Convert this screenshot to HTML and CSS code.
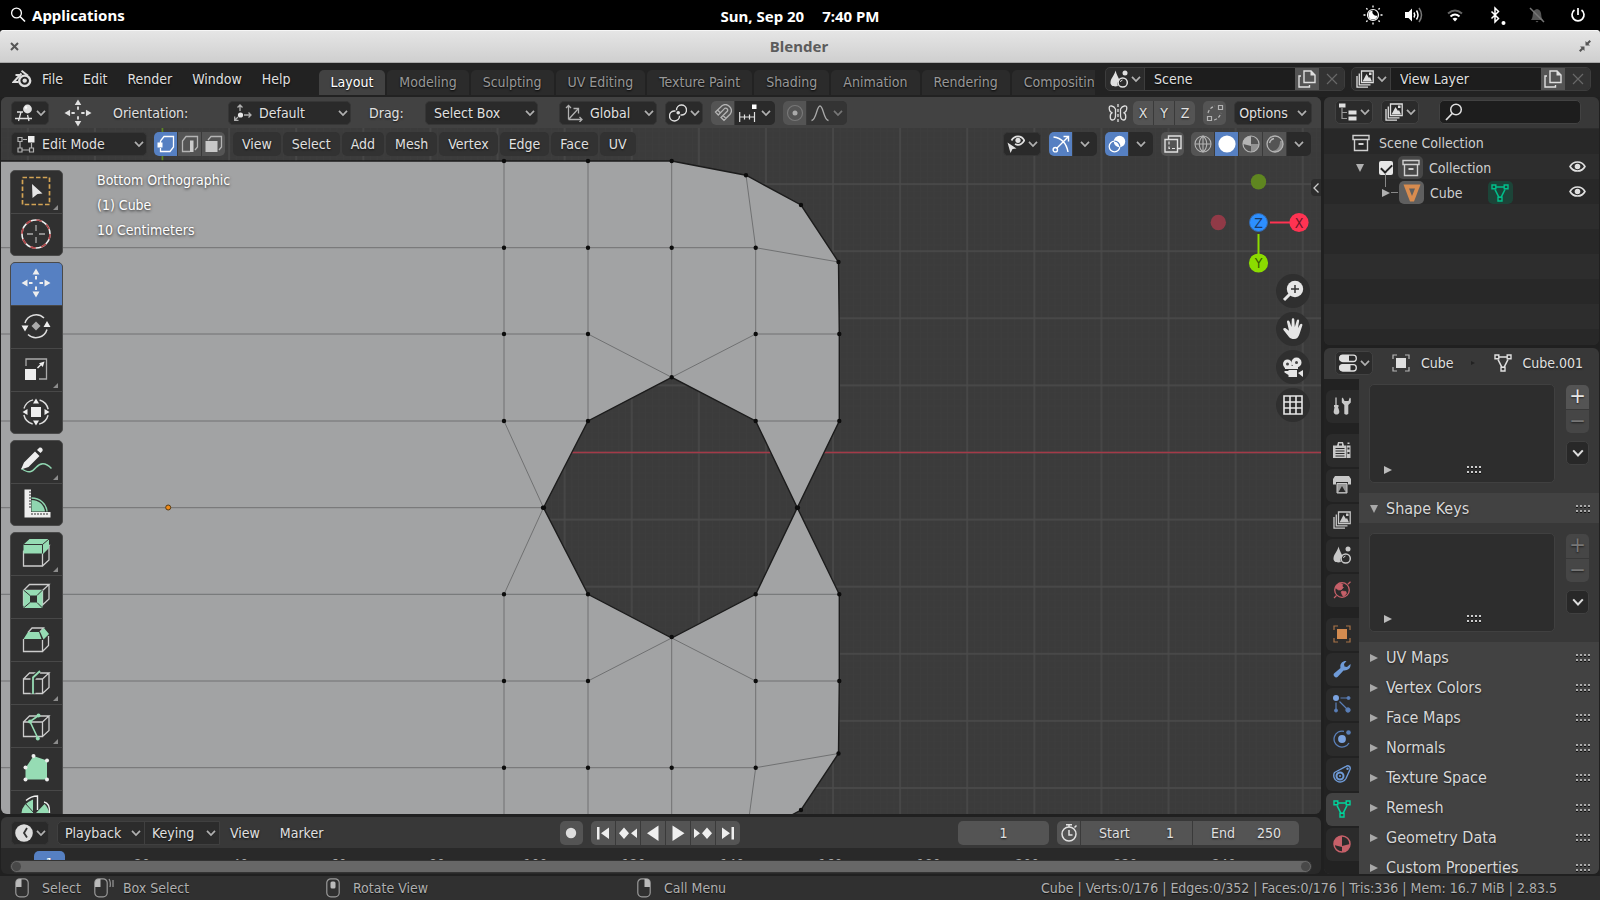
FILE: index.html
```html
<!DOCTYPE html>
<html lang="en">
<head>
<meta charset="utf-8">
<title>Blender</title>
<link rel="stylesheet" href="styles.css">
</head>
<body>
<svg class="sprite" aria-hidden="true">
  <symbol id="chev" viewBox="0 0 10 8"><path d="M1 1.800 5 6 9 1.800" fill="none" stroke="currentColor" stroke-width="1.700"/></symbol>
  <symbol id="view3d" viewBox="0 0 18 18"><path d="M2 8h6M0 14.500h17M6 8 3.500 17M12.500 11 14 17" fill="none" stroke="currentColor" stroke-width="1.300"/><circle cx="12.500" cy="5" r="4.400" fill="currentColor"/><circle cx="11" cy="3.500" r="1.200" fill="#fff"/></symbol>
  <symbol id="move" viewBox="0 0 30 30"><g fill="currentColor"><path d="M15 0.500 18.500 6.500h-7zM15 29.500l3.500-6h-7zM.5 15l6-3.500v7zM29.500 15l-6-3.500v7z"/><path d="M14 8h2v3.500h-2zM14 18.500h2V22h-2zM8 14h3.500v2H8zM18.500 14H22v2h-3.500z"/></g></symbol>
  <symbol id="orient" viewBox="0 0 18 18"><g fill="none" stroke="currentColor" stroke-width="1.300"><path d="M6 7V1M3.500 3.500 6 1l2.500 2.500M10 11h7M14.500 8.500 17 11l-2.500 2.500M4 13l-3 3M.7 12.500V16.300h3.800"/></g><circle cx="6.500" cy="11" r="2.600" fill="#e8e8e8"/></symbol>
  <symbol id="axes" viewBox="0 0 18 18"><g fill="none" stroke="currentColor" stroke-width="1.300"><path d="M3.500 15.500V1.500M1 4l2.500-2.500L6 4M3.500 15.500H17M14.500 13l2.500 2.500-2.500 2.500M3.500 15.500 13 5"/><path d="M8.500 4.500h5v5"/></g></symbol>
  <symbol id="pivot" viewBox="0 0 18 18"><g fill="none" stroke="currentColor" stroke-width="1.400"><path d="M7.500 6.200A5 5 0 1 1 13 11h-1.500"/><path d="M10.500 11.800A5 5 0 1 1 5 7h1.500"/></g><circle cx="9.200" cy="8.700" r="1.800" fill="currentColor"/></symbol>
  <symbol id="magnet" viewBox="0 0 18 18"><path d="M1.500 8 8 1.700A6 6 0 0 1 16.300 10L10 16.300 7 13.500 13.500 7A2 2 0 0 0 10.700 4.400L4.300 11zM3.500 6 6.500 9M9 11.500l3 3" fill="none" stroke="currentColor" stroke-width="1.300"/></symbol>
  <symbol id="incr" viewBox="0 0 18 18"><path d="M.7 8v10M5.500 10.500v5M10.500 10.500v5M15.500 8v10M.7 13h15" fill="none" stroke="currentColor" stroke-width="1.200"/><path d="M13 .5h4.500V5H13z" fill="#fff"/></symbol>
  <symbol id="prop" viewBox="0 0 18 18"><circle cx="9" cy="9" r="7.500" fill="none" stroke="#777" stroke-width="1.200"/><circle cx="9" cy="9" r="2.500" fill="currentColor"/></symbol>
  <symbol id="falloff" viewBox="0 0 18 18"><path d="M.5 16.500C5.500 16 5.500 2 9 2s3.500 14 8.500 14.500" fill="none" stroke="currentColor" stroke-width="1.300"/></symbol>
  <symbol id="butterfly" viewBox="0 0 20 18"><path d="M7.500 5C5.500 1.500 1 .8 1.200 4c.1 3 2 4.500 3.300 4.700C1.500 9.500 1.500 16 4.500 16c2 0 2.800-2 3-4M12.500 5c2-3.500 6.500-4.200 6.300-1-.1 3-2 4.500-3.300 4.700 3 .8 3 7.300 0 7.300-2 0-2.800-2-3-4M7.500 5v7M12.500 5v7" fill="none" stroke="currentColor" stroke-width="1.300"/><path d="M10 0v18" stroke="currentColor" stroke-width="1.300" stroke-dasharray="3 2"/></symbol>
  <symbol id="automerge" viewBox="0 0 18 18"><g fill="none" stroke="currentColor" stroke-width="1.200"><path d="M12.500 1.500h4v4h-4zM1.500 12.500h4v4h-4z"/><path d="M2 9c1-4 4-6 7-7M8 16c4-1 6-4 7-7" stroke-dasharray="3 2"/></g></symbol>
  <symbol id="editmode" viewBox="0 0 18 18"><g fill="none" stroke="currentColor" stroke-width="1.200"><path d="M1 2.500h4v4H1zM1 13h4v4H1zM12.500 13h4v4h-4zM3 7v6M5 15h7.500M14.500 8v5M6 4.500h4"/></g><path d="M11 1h6.500v6.500H11z" fill="#eee"/></symbol>
  <symbol id="vmode" viewBox="0 0 18 18"><path d="M3.500 6 7 1.500h9.500V12L13 16.500H3.500V13M3.500 8V6" fill="none" stroke="currentColor" stroke-width="1.300"/><path d="M.5 7.500h5v5h-5z" fill="#fff"/></symbol>
  <symbol id="emode" viewBox="0 0 18 18"><path d="M9 16.500H1.500V6L5 1.500h11.500V12L14 15" fill="none" stroke="currentColor" stroke-width="1.300"/><path d="M9 5.500h3.500V17H9z" fill="#ccc"/></symbol>
  <symbol id="fmode" viewBox="0 0 18 18"><path d="M3 5 6 1.500h10.500V12L14 15" fill="none" stroke="currentColor" stroke-width="1.300"/><path d="M.5 6h12v11H.5z" fill="#c8c8c8"/></symbol>
  <symbol id="visib" viewBox="0 0 18 18"><path d="M4.500 5.500C7.500 0 14.500 0 17.300 5.500 14.500 10 11 10.500 8 9" fill="none" stroke="currentColor" stroke-width="1.800"/><circle cx="11" cy="5.300" r="2.600" fill="currentColor"/><path d="M.5 7.500 9.500 13.500l-4 .5L3.500 18z" fill="currentColor"/></symbol>
  <symbol id="gizmo" viewBox="0 0 18 18"><g fill="none" stroke="currentColor" stroke-width="1.400"><path d="M1.500 2C9 3 14.500 8.500 16 17M4.500 13.500 16.500 1.500M11.500 1.500h5v5"/><circle cx="3.300" cy="14.700" r="2.200"/></g></symbol>
  <symbol id="overlay" viewBox="0 0 18 18"><circle cx="11.500" cy="6.500" r="5.700" fill="currentColor"/><circle cx="6.500" cy="11.500" r="5.300" fill="none" stroke="currentColor" stroke-width="1.300"/><path d="M6.500 6.200a5.300 5.300 0 0 1 5.300 5.300" fill="none" stroke="#5680c2" stroke-width="1.300"/></symbol>
  <symbol id="xray" viewBox="0 0 18 18"><path d="M1 4.500h12.500V17H1zM4.500 4V1H17v12.500h-3" fill="none" stroke="currentColor" stroke-width="1.400"/><path d="M5 6.500v7h6.500" fill="none" stroke="currentColor" stroke-width="1.200" stroke-dasharray="3 2"/></symbol>
  <symbol id="wire" viewBox="0 0 18 18"><g fill="none" stroke="currentColor" stroke-width="1.100"><circle cx="9" cy="9" r="8"/><path d="M1 9h16M9 1v16M9 1C4 5 4 13 9 17M9 1c5 4 5 12 0 16"/></g></symbol>
  <symbol id="solid" viewBox="0 0 18 18"><circle cx="9" cy="9" r="8.600" fill="#fff"/></symbol>
  <symbol id="matprev" viewBox="0 0 18 18"><circle cx="9" cy="9" r="8" fill="none" stroke="currentColor" stroke-width="1.200"/><path d="M9 1a8 8 0 0 0-8 8l8 2z" fill="currentColor"/><path d="M9 9h8a8 8 0 0 1-8 8z" fill="currentColor" opacity=".65"/></symbol>
  <symbol id="rendered" viewBox="0 0 18 18"><circle cx="9" cy="9" r="8" fill="none" stroke="currentColor" stroke-width="1.300"/><path d="M16.500 6A8 8 0 0 1 5 16C11 16 14 12 14 6z" fill="currentColor" opacity=".6"/><path d="M3.500 8A6 6 0 0 1 8 3.500" fill="none" stroke="currentColor" stroke-width="1.500"/></symbol>
  <symbol id="scene" viewBox="0 0 18 18"><path d="M5.500.5C6.500 5 9 8 9.500 10.500 7.500 11 7 14 8 16 5 17 0 16.500.5 12 .8 8.500 4.500 5 5.500.5z" fill="currentColor"/><circle cx="15" cy="3" r="2.500" fill="currentColor"/><circle cx="12.700" cy="12.500" r="4.600" fill="none" stroke="currentColor" stroke-width="1.500"/><path d="M10.500 12a2.200 2.200 0 0 1 2-2" stroke="currentColor" fill="none"/></symbol>
  <symbol id="layers" viewBox="0 0 18 18"><path d="M5.500 1h11.700v11.700H5.500zM3.300 3.500v11.300H14.500M1 6v11.200h11" fill="none" stroke="currentColor" stroke-width="1.300"/><path d="M6.500 11.500 10.500 4l2.500 4 1-1 2 4.500zM13 2.500h2.500V5H13z" fill="currentColor"/></symbol>
  <symbol id="copy" viewBox="0 0 18 18"><path d="M6 1h7l4 4v7.500H6z" fill="none" stroke="currentColor" stroke-width="1.400"/><path d="M12.500.8V5.500h4.700z" fill="currentColor"/><path d="M3 6H1v11h10.500v-2" fill="none" stroke="currentColor" stroke-width="1.400"/></symbol>
  <symbol id="cross" viewBox="0 0 12 12"><path d="m1 1 10 10M11 1 1 11" stroke="currentColor" stroke-width="1.200"/></symbol>
  <symbol id="outliner" viewBox="0 0 18 18"><path d="M0 .5h6.500v4H0zM9.500 7.500h8v4h-8zM9.500 13.500h8v4h-8z" fill="currentColor"/><path d="M3 5v10.500h5M3 9.500h5" fill="none" stroke="#999" stroke-width="1.200"/></symbol>
  <symbol id="search" viewBox="0 0 18 18"><circle cx="11" cy="6.500" r="5.300" fill="none" stroke="currentColor" stroke-width="1.500"/><path d="M7.200 10.500 1 17" stroke="currentColor" stroke-width="1.800"/></symbol>
  <symbol id="coll" viewBox="0 0 18 18"><path d="M1 1.500h16v4H1zM2.500 5.500v11h13v-11" fill="none" stroke="currentColor" stroke-width="1.400"/><path d="M6.500 9h5v2h-5z" fill="currentColor"/></symbol>
  <symbol id="eye" viewBox="0 0 18 14"><path d="M1 7C4.500.5 13.500.5 17 7 13.500 13.500 4.500 13.500 1 7z" fill="none" stroke="currentColor" stroke-width="1.800"/><circle cx="9" cy="7" r="3" fill="currentColor"/></symbol>
  <symbol id="mesh" viewBox="0 0 18 18"><path d="M5 3h8M4 5.500 8 13.500M14 5.500 10 13.500" fill="none" stroke="currentColor" stroke-width="1.600"/><path d="M1 1h3.800v3.800H1zM13.200 1H17v3.800h-3.800zM7 13.200h4V17H7z" fill="none" stroke="currentColor" stroke-width="1.400"/></symbol>
  <symbol id="props" viewBox="0 0 18 18"><rect x=".7" y="1.200" width="16.600" height="6.300" rx="3" fill="none" stroke="currentColor" stroke-width="1.300"/><path d="M3.500 1H10v6.500H3.500a3 3 0 0 1 0-6.500zM3.500 10.500h8V17h-8a3 3 0 0 1 0-6.500z" fill="currentColor"/><rect x=".7" y="10.700" width="16.600" height="6.300" rx="3" fill="none" stroke="currentColor" stroke-width="1.300"/></symbol>
  <symbol id="object" viewBox="0 0 18 18"><path d="M1 5V1h4M13 1h4v4M17 13v4h-4M5 17H1v-4" fill="none" stroke="currentColor" stroke-width="1.200" opacity=".75"/><path d="M4 4h10v10H4z" fill="currentColor"/></symbol>
  <symbol id="tool" viewBox="0 0 18 18"><path d="M3 .5V8" stroke="currentColor" stroke-width="1.300"/><path d="M1 8h4.500v2H5L6 13c1 3-.5 4.500-2.500 4.500S0 16 1 13l.5-3H1z" fill="currentColor"/><path d="M8.800 1.500v4L11.300 8v8.500c0 1.500 4 1.500 4 0V8L17.800 5.500v-4l-1-1L15.500 4h-4L9.800.5z" fill="currentColor"/></symbol>
  <symbol id="render" viewBox="0 0 18 18"><path d="M0 4.500h4l1-3.500h5l1 3.500h2V17H0z" fill="currentColor"/><path d="M13.500 4.500H17.500V17h-4zM14.500 1.500h2v1.500h-2z" fill="currentColor"/><path d="M6 2.500h3v2H6zM14.500 6.500h2v2h-2zM14.500 11h2v2h-2z" fill="#2b2b2b"/><path d="M2.500 7.500h9M2.500 10h9M2.500 12.500h9M2.500 15h9" stroke="#2b2b2b" stroke-width="1"/></symbol>
  <symbol id="output" viewBox="0 0 18 18"><path d="M2 0h14l2 3v5.500h-3V6H3v2.500H0V3z" fill="currentColor"/><path d="M4 7.500h10V17H4z" fill="#999" stroke="currentColor"/><path d="m5.500 16 3.500-6 3.500 6z" fill="#2b2b2b"/></symbol>
  <symbol id="world" viewBox="0 0 18 18"><circle cx="9" cy="9" r="7.300" fill="none" stroke="currentColor" stroke-width="1.300"/><path d="M2.500 5 7 2l3 1.500L9 5l1.500 1.500L8 9H5.500L2.500 7zM9 10l4 .5.5 2L11 15.500l-1.500-1L8 11z" fill="currentColor" stroke="currentColor" stroke-width=".6"/><path d="M1 17l2.500-2.500M14.800 3.300 17.500.8" stroke="currentColor" stroke-width="1.200"/></symbol>
  <symbol id="wrench" viewBox="0 0 18 18"><path d="M1 13.500 7.500 8C6.500 4 9.500.5 13.500 1L11 4l.5 2.500L14 7l3.500-3C18 8.500 14.500 11 10.500 10.500L4.500 17C2.500 18.500-.5 15.500 1 13.500z" fill="currentColor"/></symbol>
  <symbol id="particles" viewBox="0 0 18 18"><circle cx="3" cy="3" r="3" fill="#7ba3e0"/><g fill="currentColor" stroke="currentColor"><circle cx="15.500" cy="3" r="1.500"/><circle cx="3" cy="15.500" r="1.500"/><circle cx="15" cy="15" r="2.200"/><path d="M7.500 3H15M3 7.500V15M6.500 6.500 14 14" stroke-width="1.200"/></g></symbol>
  <symbol id="physics" viewBox="0 0 18 18"><path d="M11 1.300A8 8 0 1 0 16 13" fill="none" stroke="currentColor" stroke-width="1.300"/><circle cx="9" cy="9" r="3.900" fill="#7ba3e0"/><circle cx="15.500" cy="2.500" r="2.300" fill="currentColor"/></symbol>
  <symbol id="constraint" viewBox="0 0 18 18"><path d="M1.500 7.500 13 1.300C15.500-.2 18 2 17 4.500L13 13.500A6.300 6.300 0 1 1 1.500 7.500z" fill="none" stroke="currentColor" stroke-width="1.400"/><circle cx="7" cy="11" r="3.500" fill="none" stroke="currentColor" stroke-width="2"/><circle cx="7" cy="11" r="1" fill="currentColor"/><circle cx="14.500" cy="3.700" r="1.200" fill="currentColor"/></symbol>
  <symbol id="material" viewBox="0 0 18 18"><circle cx="9" cy="9" r="8" fill="none" stroke="currentColor" stroke-width="1.500"/><path d="M9 1A8 8 0 0 0 1 10l8 2zM9 11l8-2a8 8 0 0 1-8 8z" fill="currentColor"/></symbol>
  <symbol id="tri-r" viewBox="0 0 8 8"><path d="M0 0 8 4 0 8z" fill="currentColor"/></symbol>
  <symbol id="tri-d" viewBox="0 0 8 8"><path d="M0 0h8L4 8z" fill="currentColor"/></symbol>
  <symbol id="grip" viewBox="0 0 14 8"><g fill="#111"><path d="M0 2h2v1H0zM4 2h2v1H4zM8 2h2v1H8zM12 2h2v1h-2zM0 7h2v1H0zM4 7h2v1H4zM8 7h2v1H8zM12 7h2v1h-2z"/></g><g fill="currentColor"><path d="M0 0h2v2H0zM4 0h2v2H4zM8 0h2v2H8zM12 0h2v2h-2zM0 5h2v2H0zM4 5h2v2H4zM8 5h2v2H8zM12 5h2v2h-2z"/></g></symbol>
  <symbol id="mouse" viewBox="0 0 14 20"><rect x=".8" y=".8" width="12.400" height="18" rx="4" fill="none" stroke="#999" stroke-width="1.200"/></symbol>
  <symbol id="cube" viewBox="0 0 32 32"><path d="M3.500 13.500h19V28h-19zM3.500 13.500l6-6H29l-6.500 6M29 7.500V22l-6.500 6" fill="none" stroke="#ccc" stroke-width="1.300"/></symbol>
</svg>

<header class="sysbar">
  <button class="apps"><svg width="16" height="16" viewBox="0 0 16 16"><circle cx="6.500" cy="6" r="4.900" fill="none" stroke="#fff" stroke-width="1.300"/><path d="m10 9.500 5 5" stroke="#fff" stroke-width="1.600"/></svg>Applications</button>
  <div class="clock"><span>Sun, Sep 20</span><span>7:40 PM</span></div>
  <div class="tray">
    <svg width="20" height="20" viewBox="0 0 20 20"><circle cx="10" cy="10" r="5.500" fill="none" stroke="#fff" stroke-width="1.200"/><path d="M9.500 5.500a4.500 4.500 0 1 0 5 5A4 4 0 0 1 9.500 5.500z" fill="#fff"/><path d="M10 .5v2M10 17.500v2M.5 10h2M17.500 10h2M3.300 3.300l1.200 1.200M15.500 15.500l1.200 1.200M16.700 3.300l-1.200 1.200M4.500 15.500l-1.200 1.200" stroke="#fff" stroke-width="1.300"/></svg>
    <svg width="20" height="20" viewBox="0 0 20 20"><path d="M1 7h3.500L8 3.500v13L4.500 13H1z" fill="#fff"/><path d="M10 7.500q1.500 2.500 0 5M12.500 5.500q3 4.500 0 9" fill="none" stroke="#fff" stroke-width="1.500"/><path d="M15 3q5 7 0 14" fill="none" stroke="#777" stroke-width="1.500"/></svg>
    <svg width="20" height="20" viewBox="0 0 20 20"><path d="M3 8.500q7-6 14 0" fill="none" stroke="#666" stroke-width="2"/><path d="M5.500 11.500q4.500-4 9 0" fill="none" stroke="#fff" stroke-width="2"/><path d="m7.500 13.700 2.500 2.800 2.500-2.800q-2.500-2-5 0z" fill="#fff"/></svg>
    <svg width="20" height="20" viewBox="0 0 20 20"><path d="m5.500 6.500 7 7L9 17V3l3.500 3.500-7 7" fill="none" stroke="#fff" stroke-width="1.500"/><circle cx="17.500" cy="18" r="2" fill="#fff"/></svg>
    <svg width="20" height="20" viewBox="0 0 20 20"><path d="M4 15c2-2 1.500-5 2-7 .5-2.500 2-3.500 4-4 2 .5 3.500 1.500 4 4 .5 2 0 5 2 7zM8.500 16h3l-1.500 1.500z" fill="#555"/><path d="m3 3 14 14" stroke="#777" stroke-width="1.500"/></svg>
    <svg width="20" height="20" viewBox="0 0 20 20"><path d="M6.500 5A6 6 0 1 0 13.500 5M10 3v7" fill="none" stroke="#fff" stroke-width="1.700"/></svg>
  </div>
</header>

<div class="titlebar">
  <button aria-label="Close"><svg width="9" height="9" viewBox="0 0 9 9"><path d="m1 1 7 7M8 1 1 8" stroke="#555" stroke-width="2"/></svg></button>
  <h1>Blender</h1>
  <button aria-label="Restore"><svg width="12" height="12" viewBox="0 0 12 12"><path d="M6.500 5.500V1l1.500 1.500L10.500 0 12 1.500 9.500 4 11 5.500zM5.500 6.500V11L4 9.500 1.500 12 0 10.500 2.500 8 1 6.500z" fill="#555"/></svg></button>
</div>

<nav class="menubar">
  <svg class="logo" width="20" height="18" viewBox="0 0 20 18"><path d="M8.200 5H3.500M9.500 3.500 1.500 12h5" fill="none" stroke="#ddd" stroke-width="2"/><path d="m9.500.8 6.500 5" stroke="#ddd" stroke-width="2"/><ellipse cx="12.700" cy="10.800" rx="5.500" ry="5.200" fill="none" stroke="#ddd" stroke-width="2.400"/><circle cx="12.700" cy="10.600" r="2.200" fill="#ddd"/></svg>
  <div class="menus"><button>File</button><button>Edit</button><button>Render</button><button>Window</button><button>Help</button></div>
  <div class="wtabs"><button class="on">Layout</button><button>Modeling</button><button>Sculpting</button><button>UV Editing</button><button>Texture Paint</button><button>Shading</button><button>Animation</button><button>Rendering</button><button>Compositing</button></div>
  <div class="idfield">
    <button aria-label="Browse scene"><svg class="ic"><use href="#scene"/></svg><svg class="chev"><use href="#chev"/></svg></button>
    <input value="Scene" aria-label="Scene name"><button class="lit" aria-label="New scene"><svg class="ic"><use href="#copy"/></svg></button><button class="dim" aria-label="Remove scene"><svg class="x"><use href="#cross"/></svg></button>
  </div>
  <div class="idfield">
    <button aria-label="Browse view layer"><svg class="ic"><use href="#layers"/></svg><svg class="chev"><use href="#chev"/></svg></button>
    <input value="View Layer" aria-label="View layer name"><button class="lit" aria-label="New view layer"><svg class="ic"><use href="#copy"/></svg></button><button class="dim" aria-label="Remove view layer"><svg class="x"><use href="#cross"/></svg></button>
  </div>
</nav>

<main class="workspace">
  <div class="left">
    <section class="viewport">
      <svg class="scene3d" aria-hidden="true">
        <defs>
          <pattern id="minor" width="6.710" height="6.710" patternUnits="userSpaceOnUse" x="162" y="452.500"><path d="M0 0H6.710M0 0V6.710" stroke="#3e3e3e" stroke-width="1" fill="none"/></pattern>
          <pattern id="major" width="67.100" height="67.100" patternUnits="userSpaceOnUse" x="161" y="451.500"><path d="M0 1H67.100M1 0V67.100" stroke="#4b4b4b" stroke-width="1.300" fill="none"/></pattern>
        </defs>
        <g transform="translate(-1 -97)">
          <rect width="4000" height="3000" fill="url(#minor)"/>
          <rect width="4000" height="3000" fill="url(#major)"/>
          <path d="M162.500 90V170" stroke="#5d8a1c" stroke-width="1.500"/>
          <path d="M0 452.500H4000" stroke="#a43a48" stroke-width="1.300"/>
          <path class="face" fill-rule="evenodd" d="M-5 161H671.700L746 175.200 801 205 838.500 262 839.300 334V421L797.300 507.700 839.300 594.300V681L838.500 753.500 801 810 746 840 671.700 855H-5zM671.700 377.300 588 421 543.500 507.700 588 594.300 671.700 638 755.700 594.300 797.300 507.700 755.700 421z"/>
          <path class="wire" d="M0 247.700H755.700L838.500 262M755.700 247.700 746 175.200M0 334H588L671.700 377.300 755.700 334H839M0 421H588M755.700 421H839M504 421 543.500 507.700 504 594.300M0 507.700H543.500M0 594.300H588M755.700 594.300H839M0 681H588L671.700 638 755.700 681H839M0 767.700H755.700L838.500 753.500M755.700 767.700 746 840M504 161V421M504 594.300V855M588 161V421M588 594.300V855M671.700 161V377.300M671.700 638V855M755.700 247.700V421M755.700 594.300V767.700"/>
          <path class="dots" d="M504 161h0M588 161h0M671.700 161h0M746 175.200h0M801 205h0M838.500 262h0M504 247.700h0M588 247.700h0M671.700 247.700h0M755.700 247.700h0M504 334h0M588 334h0M755.700 334h0M839.300 334h0M671.700 377.300h0M504 421h0M588 421h0M755.700 421h0M839.300 421h0M543 507.700h1M797 507.700h1M504 594.300h0M588 594.300h0M755.700 594.300h0M839.300 594.300h0M671.700 637h0M504 681h0M588 681h0M755.700 681h0M839.300 681h0M838.500 753.500h0M504 767.700h0M588 767.700h0M671.700 767.700h0M755.700 767.700h0M801 810h0"/>
          <circle cx="168.200" cy="507.500" r="2.500" fill="#f08a18" stroke="#5a3a10"/>
        </g>
      </svg>

      <div class="head tools">
        <button class="w ed" aria-label="Editor type"><svg class="ic"><use href="#view3d"/></svg><svg class="chev"><use href="#chev"/></svg></button>
        <svg class="mv"><use href="#move"/></svg>
        <label class="lab-or" for="orientation">Orientation:</label>
        <span class="w pick p-def"><svg class="ic"><use href="#orient"/></svg><select id="orientation"><option>Default</option></select><svg class="chev"><use href="#chev"/></svg></span>
        <label class="lab-dr" for="drag">Drag:</label>
        <span class="w pick p-box"><select id="drag"><option>Select Box</option></select><svg class="chev"><use href="#chev"/></svg></span>
        <span class="w pick p-glo"><svg class="ic"><use href="#axes"/></svg><select aria-label="Transform orientation"><option>Global</option></select><svg class="chev"><use href="#chev"/></svg></span>
        <button class="w ed" aria-label="Pivot point"><svg class="ic"><use href="#pivot"/></svg><svg class="chev"><use href="#chev"/></svg></button>
        <div class="grp"><button class="t mute" aria-label="Snap"><svg class="ic"><use href="#magnet"/></svg></button><button class="d" aria-label="Snapping"><svg class="ic"><use href="#incr"/></svg><svg class="chev"><use href="#chev"/></svg></button></div>
        <div class="grp faded"><button class="t" aria-label="Proportional editing"><svg class="ic"><use href="#prop"/></svg></button><button class="d" aria-label="Falloff"><svg class="ic"><use href="#falloff"/></svg><svg class="chev"><use href="#chev"/></svg></button></div>
        <div class="push"><svg class="bfly"><use href="#butterfly"/></svg>
          <div class="grp xyz"><button class="t">X</button><button class="t">Y</button><button class="t">Z</button></div>
          <div class="grp"><button class="t mute" aria-label="Auto merge"><svg class="ic"><use href="#automerge"/></svg></button></div>
          <button class="w opts">Options<svg class="chev"><use href="#chev"/></svg></button></div>
      </div>

      <div class="head modes">
        <span class="w pick p-mode"><svg class="ic"><use href="#editmode"/></svg><select aria-label="Mode"><option>Edit Mode</option></select><svg class="chev"><use href="#chev"/></svg></span>
        <div class="grp"><button class="t blue" aria-label="Vertex select"><svg class="ic"><use href="#vmode"/></svg></button><button class="t mute" aria-label="Edge select"><svg class="ic"><use href="#emode"/></svg></button><button class="t mute" aria-label="Face select"><svg class="ic"><use href="#fmode"/></svg></button></div>
        <div class="vmenus"><button>View</button><button>Select</button><button>Add</button><button>Mesh</button><button>Vertex</button><button>Edge</button><button>Face</button><button>UV</button></div>
        <div class="push">
          <button class="w ed" aria-label="Visibility"><svg class="ic"><use href="#visib"/></svg><svg class="chev"><use href="#chev"/></svg></button>
          <div class="grp"><button class="t blue" aria-label="Gizmos"><svg class="ic"><use href="#gizmo"/></svg></button><button class="d a" aria-label="Gizmo options"><svg class="chev"><use href="#chev"/></svg></button></div>
          <div class="grp"><button class="t blue" aria-label="Overlays"><svg class="ic"><use href="#overlay"/></svg></button><button class="d a" aria-label="Overlay options"><svg class="chev"><use href="#chev"/></svg></button></div>
          <div class="grp"><button class="t" aria-label="X-ray"><svg class="ic"><use href="#xray"/></svg></button></div>
          <div class="grp shade"><button class="t mute" aria-label="Wireframe"><svg class="ic"><use href="#wire"/></svg></button><button class="t blue" aria-label="Solid"><svg class="ic"><use href="#solid"/></svg></button><button class="t mute" aria-label="Material preview"><svg class="ic"><use href="#matprev"/></svg></button><button class="t mute" aria-label="Rendered"><svg class="ic"><use href="#rendered"/></svg></button><button class="d a" aria-label="Shading options"><svg class="chev"><use href="#chev"/></svg></button></div>
        </div>
      </div>

      <div class="canvas">
        <div class="toolbar">
          <div class="tg">
            <button class="more" aria-label="Select box"><svg viewBox="0 0 32 32"><rect x="2.500" y="2.500" width="27" height="27" fill="none" stroke="#d3a455" stroke-width="1.700" stroke-dasharray="4.500 2.250"/><path d="m12 9 10.500 9.500-5 .5-5 4z" fill="#e6e6e6"/></svg></button>
            <button aria-label="Cursor"><svg viewBox="0 0 32 32"><circle cx="16" cy="16" r="14" fill="none" stroke="#eee" stroke-width="1.600"/><circle cx="16" cy="16" r="14" fill="none" stroke="#b04548" stroke-width="1.700" stroke-dasharray="5.500 5.500"/><path d="M16 7v6M16 19v6M7 16h6M19 16h6" stroke="#aaa" stroke-width="1.300"/></svg></button>
          </div>
          <div class="tg">
            <button class="on" aria-label="Move"><svg viewBox="-1 -1 32 32"><use href="#move" width="30" height="30"/></svg></button>
            <button aria-label="Rotate"><svg viewBox="0 0 32 32"><path d="M5 13A11.500 11.500 0 0 1 24 8M27 19.500A11.500 11.500 0 0 1 8 24.500" fill="none" stroke="#ddd" stroke-width="1.500"/><path d="M1.500 15.500h7L5 21.500zM23.500 17h7L27 11z" fill="#eee"/><path d="m16 11.500 4.500 4.500-4.500 4.500-4.500-4.500z" fill="#aaa"/></svg></button>
            <button class="more" aria-label="Scale"><svg viewBox="0 0 32 32"><path d="M6 13V6h20.500v20H19" fill="none" stroke="#aaa" stroke-width="1.300"/><path d="M5 16h11v11H5z" fill="#eee"/><path d="m17.500 15 3.500-3.500" stroke="#eee" stroke-width="1.500"/><path d="m19 10.200 5.500-1.700-1.700 5.500z" fill="#eee"/></svg></button>
            <button aria-label="Transform"><svg viewBox="0 0 32 32"><circle cx="16" cy="16" r="12.500" fill="none" stroke="#ddd" stroke-width="1.400" stroke-dasharray="13 6.630" stroke-dashoffset="-3.300"/><path d="M11 11h10v10H11zM16 2.500l3 5h-6zM16 29.500l3-5h-6zM2.500 16l5-3v6zM29.500 16l-5-3v6z" fill="#eee"/></svg></button>
          </div>
          <div class="tg">
            <button class="more" aria-label="Annotate"><svg viewBox="0 0 32 32"><path d="M1.500 23.500C9 29 12 27 16 22.500s9-6 15.500 1" fill="none" stroke="#8fd6b0" stroke-width="1.500"/><path d="M4 17.500 15 6.500l4.500 4.500-11 11L1 24.500zM17 5l2-2c2-1.500 4.500 1 3.500 3l-2 2z" fill="#eee"/></svg></button>
            <button aria-label="Measure"><svg viewBox="0 0 32 32"><path d="M4.500 1.500h6.500v22.500h19.500v5.500h-26z" fill="#eee"/><path d="M11.500 12C19 12 24 17 25 23.500H11.500z" fill="#8fd6b0"/><path d="M11.500 10C20 10 26.500 16 27 23.500" fill="none" stroke="#8fd6b0" stroke-width="1.300"/><path d="M9 4h2M9 7h2M9 10h2M9 13h2M9 16h2M9 19h2M12 25v2M15 25v2M18 25v2M21 25v2M24 25v2M27 25v2" stroke="#333"/></svg></button>
          </div>
          <div class="tg">
            <button class="more" aria-label="Extrude"><svg viewBox="0 0 32 32"><use href="#cube" y="1"/><path d="M3.500 7.500 9.500 2H29v9l-6.500 6.500v-1h-19z" fill="#96dcb4"/><path d="M3.500 7.500h19L29 2M22.500 7.500v9" fill="none" stroke="#333"/></svg></button>
            <button aria-label="Inset"><svg viewBox="0 0 32 32"><use href="#cube" y="-3"/><path fill-rule="evenodd" d="M3.500 10h19v18h-19zM10 15.500v7h7v-7z" fill="#96dcb4"/><path d="m3.500 10 6.500 5.500M22.500 10 17 15.500M3.500 28l6.500-5.500M22.500 28 17 22.500" stroke="#333"/></svg></button>
            <button aria-label="Bevel"><svg viewBox="0 0 32 32"><path d="M3.500 16V28.500h19V17M22.500 28.500l6-6V13M8 9.500l4-4.500h11.500l-3.500 4" fill="none" stroke="#ccc" stroke-width="1.300"/><path d="m3.500 16 4.500-7h11l2.500 7zM20 8.500 24 5l5 6-5.500 5.500z" fill="#96dcb4"/></svg></button>
            <button class="more" aria-label="Loop cut"><svg viewBox="0 0 32 32"><use href="#cube" y="-.5"/><path d="M13 27.500V12l6-5.500" stroke="#333" stroke-width="5" fill="none"/><path d="M13 28V11.500L20 5" fill="none" stroke="#96dcb4" stroke-width="1.800"/></svg></button>
            <button class="more" aria-label="Knife"><svg viewBox="0 0 32 32"><use href="#cube" y="-.5"/><path d="M18.500 6.500 10 12.500l8 17" fill="none" stroke="#96dcb4" stroke-width="1.600"/><g fill="#96dcb4"><circle cx="18.500" cy="6.500" r="2"/><circle cx="10" cy="12.500" r="2"/><circle cx="17.800" cy="29.500" r="2"/></g></svg></button>
            <button aria-label="Poly build"><svg viewBox="0 0 32 32"><path d="M13.500 4 27 8.500v19H5.500V16z" fill="#96dcb4"/><g fill="#eee"><circle cx="13.500" cy="4" r="2"/><circle cx="27" cy="8.500" r="2"/><circle cx="27" cy="27.500" r="2"/><circle cx="5.500" cy="27.500" r="2"/><circle cx="5.500" cy="15.500" r="2"/></g></svg></button>
            <button aria-label="Spin"><svg viewBox="0 0 32 32"><path d="M1.500 18Q2 9 13 4.500V18zM16 18l8.500-9q4 4 4.500 9z" fill="#96dcb4"/><path d="M6 5.500Q11 1 17.500 1v14M24 7q6 1 5.500 11" fill="none" stroke="#eee" stroke-width="1.400"/><path d="m5 8 9 10" stroke="#333"/><path d="M1.500 20h28a14 14 0 0 1-28 0z" fill="#96dcb4"/></svg></button>
          </div>
        </div>
        <div class="info"><p>Bottom Orthographic</p><p>(1) Cube</p><p>10 Centimeters</p></div>
        <div class="navcol">
          <svg class="gizmo3d" width="104" height="104" viewBox="0 0 104 104"><path d="M65 53.500H86" stroke="#ff3352" stroke-width="2"/><path d="M53.500 65V88" stroke="#8bdc00" stroke-width="2"/><circle cx="53.500" cy="12.700" r="7.700" fill="#5f8620"/><circle cx="13.300" cy="53.500" r="7.700" fill="#913a47"/><circle cx="53.500" cy="53.500" r="9" fill="#2c8fff" stroke="#3569ab" stroke-width="1"/><circle cx="94" cy="53.500" r="9.600" fill="#ff3352"/><circle cx="53.500" cy="94" r="9.600" fill="#8bdc00"/><text x="53.500" y="58.500" fill="#1b3a66">Z</text><text x="94" y="58.500" fill="#6b1526">X</text><text x="53.500" y="99" fill="#375a00">Y</text></svg>
          <div class="nav">
            <button aria-label="Zoom"><svg viewBox="0 0 34 34"><circle cx="19" cy="15" r="8.200" fill="#e6e6e6"/><path d="m14 20-6 6" stroke="#e6e6e6" stroke-width="3"/><path d="M15 15h8M19 11v8" stroke="#333" stroke-width="1.500"/></svg></button>
            <button aria-label="Pan"><svg viewBox="0 0 34 34"><path d="M13 25 7.500 18c-1-1.600 1-2.600 2.500-1.500l3 2.300L11 10c-.3-1.800 2-2.200 2.500-.5L15.500 15 15.800 7.500c.1-1.800 2.400-1.800 2.500 0L18.800 15l2-6.500c.5-1.700 2.600-1.200 2.300.5L22 16l2-3.500c1-1.500 3-.5 2.300 1L23.500 22c-1 3-2.500 5-5.500 5-2 0-3.800-.500-5-2z" fill="#e6e6e6"/></svg></button>
            <button aria-label="Camera view"><svg viewBox="0 0 34 34"><g fill="#e6e6e6"><circle cx="11.500" cy="14" r="4.500"/><circle cx="20.500" cy="12.500" r="5"/><path d="M9 16h13v3H9zM12.500 20H21v7h-8.500v-2L8.500 22.500V21h4zM22 23l5-3v7z"/></g><circle cx="11.500" cy="14" r="1.500" fill="#444"/><circle cx="20.500" cy="12.500" r="1.500" fill="#444"/></svg></button>
            <button aria-label="Orthographic"><svg viewBox="0 0 34 34"><path d="M8 8h18v18H8zM14 8v18M20 8v18M8 14h18M8 20h18" fill="none" stroke="#e6e6e6" stroke-width="1.600"/></svg></button>
          </div>
        </div>
        <button class="sidetab" aria-label="Show sidebar"><svg width="6" height="10" viewBox="0 0 6 10"><path d="M5.500.5 1 5l4.500 4.500" fill="none" stroke="#ccc" stroke-width="1.300"/></svg></button>
      </div>
    </section>

    <section class="timeline">
      <div class="thead">
        <button class="w ed" aria-label="Editor type"><svg class="ic" viewBox="0 0 18 18"><circle cx="9" cy="9" r="8.800" fill="#ddd"/><path d="M12 4 9 9l3 4.500" fill="none" stroke="#333" stroke-width="1.800"/></svg><svg class="chev"><use href="#chev"/></svg></button>
        <div class="pk"><button>Playback<svg class="chev"><use href="#chev"/></svg></button><button>Keying<svg class="chev"><use href="#chev"/></svg></button></div>
        <button class="plain">View</button><button class="plain">Marker</button>
        <div class="play">
          <div class="grp"><button class="t" aria-label="Auto keying"><svg class="ic" viewBox="0 0 18 18"><circle cx="9" cy="9" r="5.200" fill="#ddd"/></svg></button></div>
          <div class="grp six">
            <button class="t" aria-label="Jump to start"><svg class="ic" viewBox="0 0 18 18"><path d="M3 3h2.500v12.500H3zM15 3.500v11.500L7 9.200z" fill="currentColor"/></svg></button>
            <button class="t" aria-label="Previous keyframe"><svg class="ic" viewBox="0 0 18 18"><path d="m5 3.500 5 5.700-5 5.700L0 9.200zM18 4.500v9.500L12 9.200z" fill="currentColor"/></svg></button>
            <button class="t" aria-label="Play reverse"><svg class="ic" viewBox="0 0 18 18"><path d="M14.500 1.500v15.500L3 9.200z" fill="currentColor"/></svg></button>
            <button class="t" aria-label="Play"><svg class="ic" viewBox="0 0 18 18"><path d="M3.500 1.500v15.500L15.500 9.200z" fill="currentColor"/></svg></button>
            <button class="t" aria-label="Next keyframe"><svg class="ic" viewBox="0 0 18 18"><path d="m13 3.500 5 5.700-5 5.700-5-5.700zM0 4.500v9.500l6-4.800z" fill="currentColor"/></svg></button>
            <button class="t" aria-label="Jump to end"><svg class="ic" viewBox="0 0 18 18"><path d="M12.500 3H15v12.500h-2.500zM3 3.500v11.500l8-5.800z" fill="currentColor"/></svg></button>
          </div>
        </div>
        <input class="frame" value="1" aria-label="Current frame">
        <div class="grp range"><button class="t" aria-label="Use preview range"><svg class="ic" viewBox="0 0 18 18"><circle cx="9" cy="10" r="7" fill="none" stroke="currentColor" stroke-width="1.500"/><path d="M9 6v5h3.500M6 .8h6M9 1v2M14.500 3.500l2-2" fill="none" stroke="currentColor" stroke-width="1.500"/></svg></button><label class="num n1">Start<input value="1"></label><label class="num n2">End<input value="250"></label></div>
      </div>
      <div class="ruler">
        <div class="ticks"><span>20</span><span>40</span><span>60</span><span>80</span><span>100</span><span>120</span><span>140</span><span>160</span><span>180</span><span>200</span><span>220</span><span>240</span></div>
        <span class="cur">1</span>
        <div class="scroll"><i></i><i></i></div>
      </div>
    </section>
  </div>

  <div class="right">
    <section class="outliner">
      <div class="head">
        <button class="w ed" aria-label="Editor type"><svg class="ic"><use href="#outliner"/></svg><svg class="chev"><use href="#chev"/></svg></button>
        <button class="w ed" aria-label="Display mode"><svg class="ic"><use href="#layers"/></svg><svg class="chev"><use href="#chev"/></svg></button>
        <label class="w search"><svg class="ic"><use href="#search"/></svg><input aria-label="Search"></label>
      </div>
      <div class="rows">
        <div class="row r0"><svg class="ic"><use href="#coll"/></svg><span>Scene Collection</span></div>
        <div class="row r1"><svg class="tri"><use href="#tri-d"/></svg><input type="checkbox" checked aria-label="Collection enabled"><span class="box"><svg class="ic"><use href="#coll"/></svg></span><span>Collection</span><svg class="eye"><use href="#eye"/></svg></div>
        <div class="row r2"><svg class="tri"><use href="#tri-r"/></svg><i class="link"></i><span class="box ob"><svg class="ic" viewBox="0 0 18 18"><path d="M.5.500h17L11 17.500H7z" fill="#d88c4f"/><path d="M6 4.500h6L9 12z" fill="#5f5f5f"/></svg></span><span>Cube</span><span class="box me"><svg class="ic"><use href="#mesh"/></svg></span><svg class="eye"><use href="#eye"/></svg></div>
      </div>
    </section>

    <section class="props">
      <div class="phead">
        <button class="w ed" aria-label="Editor type"><svg class="ic"><use href="#props"/></svg><svg class="chev"><use href="#chev"/></svg></button>
        <svg class="ic"><use href="#object"/></svg><span>Cube</span><svg class="sep"><use href="#tri-r"/></svg><svg class="ic"><use href="#mesh"/></svg><span class="pname">Cube.001</span>
      </div>
      <div class="pbody">
        <div class="ptabs">
          <button aria-label="Tool"><svg class="ic"><use href="#tool"/></svg></button>
          <button class="brk" aria-label="Render"><svg class="ic"><use href="#render"/></svg></button>
          <button aria-label="Output"><svg class="ic"><use href="#output"/></svg></button>
          <button aria-label="View layer"><svg class="ic"><use href="#layers"/></svg></button>
          <button aria-label="Scene"><svg class="ic"><use href="#scene"/></svg></button>
          <button class="red" aria-label="World"><svg class="ic"><use href="#world"/></svg></button>
          <button class="brk orange" aria-label="Object"><svg class="ic"><use href="#object"/></svg></button>
          <button class="azure" aria-label="Modifiers"><svg class="ic"><use href="#wrench"/></svg></button>
          <button class="navy" aria-label="Particles"><svg class="ic"><use href="#particles"/></svg></button>
          <button class="navy" aria-label="Physics"><svg class="ic"><use href="#physics"/></svg></button>
          <button class="azure" aria-label="Constraints"><svg class="ic"><use href="#constraint"/></svg></button>
          <button class="green on" aria-label="Object data"><svg class="ic"><use href="#mesh"/></svg></button>
          <button class="red" aria-label="Material"><svg class="ic"><use href="#material"/></svg></button>
        </div>
        <div class="panels">
          <div class="lists first"><div class="list"><svg class="tri"><use href="#tri-r"/></svg><svg class="grip"><use href="#grip"/></svg></div><div class="lb"><button class="plus">+</button><button class="minus off">−</button><button class="more2" aria-label="Specials"><svg class="chev"><use href="#chev"/></svg></button></div></div>
          <button class="ph"><svg class="tri"><use href="#tri-d"/></svg>Shape Keys<svg class="grip"><use href="#grip"/></svg></button>
          <div class="lists"><div class="list"><svg class="tri"><use href="#tri-r"/></svg><svg class="grip"><use href="#grip"/></svg></div><div class="lb"><button class="plus off">+</button><button class="minus off">−</button><button class="more2" aria-label="Specials"><svg class="chev"><use href="#chev"/></svg></button></div></div>
          <button class="ph"><svg class="tri"><use href="#tri-r"/></svg>UV Maps<svg class="grip"><use href="#grip"/></svg></button>
          <button class="ph"><svg class="tri"><use href="#tri-r"/></svg>Vertex Colors<svg class="grip"><use href="#grip"/></svg></button>
          <button class="ph"><svg class="tri"><use href="#tri-r"/></svg>Face Maps<svg class="grip"><use href="#grip"/></svg></button>
          <button class="ph"><svg class="tri"><use href="#tri-r"/></svg>Normals<svg class="grip"><use href="#grip"/></svg></button>
          <button class="ph"><svg class="tri"><use href="#tri-r"/></svg>Texture Space<svg class="grip"><use href="#grip"/></svg></button>
          <button class="ph"><svg class="tri"><use href="#tri-r"/></svg>Remesh<svg class="grip"><use href="#grip"/></svg></button>
          <button class="ph"><svg class="tri"><use href="#tri-r"/></svg>Geometry Data<svg class="grip"><use href="#grip"/></svg></button>
          <button class="ph"><svg class="tri"><use href="#tri-r"/></svg>Custom Properties<svg class="grip"><use href="#grip"/></svg></button>
        </div>
      </div>
    </section>
  </div>
</main>

<footer class="status">
  <div class="hints"><svg width="14" height="20" viewBox="0 0 14 20"><use href="#mouse"/><path d="M1 9V5q0-4 4-4h1.500v8z" fill="#bbb"/></svg><span>Select</span><svg width="20" height="20" viewBox="0 0 20 20"><use href="#mouse" width="14" height="20"/><path d="M1 9V5q0-4 4-4h1.500v8z" fill="#bbb"/><path d="M15 1q2 3 1 8M19 2v7" fill="none" stroke="#999" stroke-width="1.200"/></svg><span>Box Select</span></div>
  <div class="hints"><svg width="14" height="20" viewBox="0 0 14 20"><use href="#mouse"/><rect x="4.500" y="3.500" width="5" height="7" rx="1.500" fill="#bbb"/></svg><span>Rotate View</span></div>
  <div class="hints"><svg width="14" height="20" viewBox="0 0 14 20"><use href="#mouse"/><path d="M13 9V5q0-4-4-4H7.500v8z" fill="#bbb"/></svg><span>Call Menu</span></div>
  <p>Cube | Verts:0/176 | Edges:0/352 | Faces:0/176 | Tris:336 | Mem: 16.7 MiB | 2.83.5</p>
</footer>
</body>
</html>
```

FILE: styles.css
```css
* { box-sizing: border-box; }
html, body { height: 100%; }
body {
  margin: 0; display: flex; flex-direction: column; overflow: hidden;
  background: #202020; color: #e0e0e0;
  font: 14px/18px "DejaVu Sans Condensed", "DejaVu Sans", sans-serif;
}
button, input, select { font: inherit; color: inherit; border: 0; padding: 0; margin: 0; background: none; outline: 0; text-shadow: inherit; }
button { display: flex; align-items: center; justify-content: center; white-space: nowrap; }
p, h1 { margin: 0; font-weight: inherit; font-size: inherit; }
svg { display: block; flex: none; }
.sprite { position: absolute; width: 0; height: 0; }
.ic { width: 18px; height: 18px; }
.chev { width: 10px; height: 8px; color: #b0b0b0; }

/* desktop panel */
.sysbar { height: 30px; flex: none; background: #000; color: #fff; display: grid; grid-template-columns: 1fr auto 1fr; align-items: center; font: 700 15px/20px "Noto Sans", sans-serif; }
.apps { gap: 6px; padding-left: 10px; justify-self: start; }
.clock { display: flex; gap: 18px; padding-top: 1px; }
.tray { justify-self: end; display: flex; gap: 21px; padding-right: 12px; }

.titlebar { height: 33px; flex: none; display: flex; align-items: center; justify-content: space-between; padding: 0 9px 0 10px; background: linear-gradient(#e6e6e6, #cfcfcf); border-bottom: 1px solid #a8a8a8; border-radius: 4px 4px 0 0; box-shadow: inset 0 1px #f6f6f6; }
.titlebar h1 { font: 700 15px/20px "Noto Sans", sans-serif; color: #5c5c5c; }

/* menu bar */
.menubar { height: 34px; flex: none; display: flex; background: #222; text-shadow: 0 1px 2px #000; }
.logo { margin: 7px 0 0 12px; }
.menus { display: flex; height: 31px; }
.menus button { padding: 0 10px; }
.wtabs { display: flex; gap: 2px; flex: 1 1 0; min-width: 0; overflow: hidden; margin: 7px 10px 2px 18px; }
.wtabs button { padding: 0 12px 2px; background: #2b2b2b; color: #989898; border-radius: 5px 5px 0 0; flex: none; }
.wtabs .on { background: #424242; color: #fff; }
.idfield { display: flex; width: 240px; height: 24px; margin: 4px 6px 0 0; border: 1px solid #3d3d3d; border-radius: 5px; background: #2b2b2b; overflow: hidden; }
.idfield:last-child { margin-right: 9px; }
.idfield button:first-child { width: 38px; gap: 3px; }
.idfield input { flex: 1; min-width: 0; background: #1d1d1d; padding-left: 9px; border-left: 1px solid #3d3d3d; }
.idfield .lit { width: 24px; background: #545454; }
.idfield .dim { width: 25px; background: #333; color: #686868; }
.x { width: 12px; height: 12px; }

.workspace { flex: 1; min-height: 0; display: grid; grid-template-columns: minmax(0, 1fr) 275px; gap: 3px; padding: 0 1px 2px; }
.left, .right { display: flex; flex-direction: column; gap: 3px; min-height: 0; }

/* shared header widgets */
.head { display: flex; align-items: center; text-shadow: 0 1px 2px rgba(0, 0, 0, .7); }
.w { height: 24px; background: #2a2a2a; border: 1px solid #363636; border-radius: 5px; }
.ed { width: 38px; flex: none; gap: 3px; }
.pick { display: grid; align-items: center; }
.pick > * { grid-area: 1 / 1; }
.pick select { appearance: none; width: 100%; height: 22px; padding-left: 30px; }
.pick .ic { margin-left: 5px; color: #b0b0b0; }
.pick .chev { justify-self: end; margin-right: 2px; }
.pick svg { pointer-events: none; }
.grp { display: flex; gap: 1px; height: 24px; border-radius: 5px; overflow: hidden; background: #3a3a3a; }
.grp .t { width: 23px; background: #545454; }
.grp .blue { background: #5680c2; color: #fff; }
.grp .d { background: #2a2a2a; gap: 4px; padding: 0 4px; }
.grp .a { width: 24px; }
.mute .ic { color: #b4b4b4; }
.faded { color: #aaa; }
.faded .d { background: #343434; }
.faded .chev { color: #777; }
.push { margin-left: auto; display: flex; align-items: center; gap: 8px; padding-right: 9px; }

/* 3D viewport */
.viewport { flex: 1; min-height: 0; position: relative; display: flex; flex-direction: column; border-radius: 6px; overflow: hidden; background: #3b3b3b; }
.scene3d { position: absolute; inset: 0; width: 100%; height: 100%; }
.face { fill: #a2a3a4; stroke: #1c1c1c; stroke-width: 1.4px; }
.wire { fill: none; stroke: #707172; stroke-width: 1px; }
.dots { fill: none; stroke: #0c0c0c; stroke-width: 4.4px; stroke-linecap: round; }
.tools { position: relative; height: 31px; flex: none; padding-left: 10px; background: #424242; }
.mv { width: 28px; height: 28px; margin-left: 15px; }
.lab-or { margin-left: 21px; width: 115px; }
.p-def { width: 123px; }
.lab-dr { margin-left: 18px; width: 56px; }
.p-box { width: 113px; }
.p-box select { padding-left: 8px; }
.p-glo { width: 98px; margin: 0 8px 0 21px; }
.tools > .grp { margin-left: 8px; }
.xyz { margin: 0 0 0 -3px; }
.xyz .t { width: 20px; }
.bfly { width: 20px; height: 18px; }
.opts { width: 78px; gap: 9px; }
.modes { position: relative; height: 33px; flex: none; padding: 0 0 2px 10px; }
.p-mode { width: 136px; margin-right: 7px; }
.modes .push { padding-right: 10px; }
.vmenus { display: flex; gap: 2px; margin-left: 8px; }
.vmenus button { height: 24px; padding: 0 9px; border-radius: 5px; background: #323232; }
.shade { margin-left: -1px; }

.canvas { position: relative; flex: 1; min-height: 0; display: flex; align-items: flex-start; padding: 9px 9px 0; }
.toolbar { display: flex; flex-direction: column; gap: 6px; width: 53px; height: 100%; overflow: hidden; }
.tg { flex: none; border: 1px solid #4a4a4a; border-radius: 5px; overflow: hidden; background: #303030; }
.tg button { position: relative; width: 100%; height: 43px; padding: 0 2px 2px 0; border-bottom: 1px solid #484848; color: #eee; }
.tg button:last-child { height: 41px; border: 0; }
.tg svg { width: 32px; height: 32px; }
.tg .on { background: #5680c2; }
.more::after { content: ""; position: absolute; right: 4px; bottom: 3px; width: 5px; height: 5px; background: #8c8c8c; clip-path: polygon(100% 0, 100% 100%, 0 100%); }
.info { margin-left: 34px; color: #fff; line-height: 25px; text-shadow: 0 1px 3px rgba(0, 0, 0, .8); margin-top: -2px; }
.navcol { margin-left: auto; display: flex; flex-direction: column; align-items: flex-end; margin-top: -1px; }
.gizmo3d { margin-right: 3px; }
.gizmo3d text { font: 14px "DejaVu Sans Condensed", "DejaVu Sans", sans-serif; text-anchor: middle; }
.nav { display: flex; flex-direction: column; gap: 4px; margin: 1px 2px 0 0; }
.nav button { width: 34px; height: 34px; border-radius: 50%; background: #2f2f2f; }
.nav svg { width: 34px; height: 34px; }
.sidetab { position: absolute; right: 0; top: 18px; width: 10px; height: 17px; border-radius: 4px 0 0 4px; background: #2d2d2d; }

/* timeline */
.timeline { height: 57px; flex: none; border-radius: 6px; overflow: hidden; background: #292929; display: flex; flex-direction: column; text-shadow: 0 1px 2px rgba(0, 0, 0, .7); }
.thead { height: 31px; display: flex; align-items: center; padding-left: 10px; background: #383838; }
.pk { display: flex; height: 24px; margin-left: 8px; border: 1px solid #404040; border-radius: 5px 0 0 5px; background: #2c2c2c; }
.pk button { width: 86px; justify-content: space-between; padding: 0 3px 0 7px; }
.pk button + button { width: 75px; border-left: 1px solid #404040; }
.plain { padding: 0 10px; }
.play { display: flex; gap: 8px; margin: 0 auto; padding-left: 8px; }
.play .t { color: #eee; }
.six { display: grid; grid-template-columns: repeat(6, 24px); }
.six .t { width: 24px; }
.frame { width: 91px; height: 24px; text-align: center; background: #545454; border-radius: 5px; margin-right: 8px; }
.range { margin-right: 22px; }
.num { display: flex; align-items: center; justify-content: space-between; background: #545454; padding: 0 18px; }
.num input { width: 40px; text-align: right; }
.n1 { width: 111px; }
.n2 { width: 106px; }
.ruler { position: relative; flex: 1; }
.ticks { display: flex; justify-content: space-between; padding: 7px 82px 0 126px; color: #aaa; }
.ticks span { width: 30px; text-align: center; }
.cur { position: absolute; left: 33px; top: 3px; width: 31px; height: 22px; text-align: center; line-height: 25px; border-radius: 5px; background: #5680c2; color: #fff; }
.scroll { position: absolute; left: 9px; right: 9px; bottom: 1px; height: 13px; border-radius: 7px; background: #676767; border: 1px solid #333; display: flex; justify-content: space-between; align-items: center; padding: 0 1px; }
.scroll i { width: 9px; height: 9px; border-radius: 50%; background: #484848; }

/* outliner */
.outliner { height: 248px; flex: none; border-radius: 6px; overflow: hidden; background: #2d2d2d; display: flex; flex-direction: column; }
.outliner .head { height: 31px; flex: none; background: #383838; padding: 0 18px 1px 11px; gap: 8px; }
.outliner .w, .phead .w { border-color: #424242; background: #2b2b2b; }
.outliner .search { flex: 1; min-width: 0; margin-left: 12px; background: #1d1d1d; display: flex; align-items: center; padding-left: 5px; }
.search input { flex: 1; min-width: 0; }
.rows { flex: 1; background: repeating-linear-gradient(#282828 0 25px, #2d2d2d 25px 50px); margin-top: 1px; color: #cfcfcf; }
.row { display: flex; align-items: center; height: 25px; position: relative; padding: 2px 13px 0 0; }
.r0 { padding-left: 28px; gap: 9px; }
.r1 { padding-left: 32px; }
.r2 { padding-left: 58px; }
.tri { width: 8px; height: 8px; color: #b0b0b0; }
.row input { appearance: none; width: 14px; height: 14px; border-radius: 2px; background: #e6e6e6; margin: 0 5px 0 15px; position: relative; }
.row input::after { content: ""; position: absolute; left: 4px; top: 1px; width: 5px; height: 9px; border: solid #222; border-width: 0 2px 2px 0; transform: rotate(45deg); }
.box { width: 25px; height: 23px; border-radius: 5px; background: #474747; display: flex; align-items: center; justify-content: center; }
.box + span { margin-left: 6px; }
.ob { background: #5f5f5f; margin-left: 9px; }
.row .me { margin-left: 25px; background: #1c4438; color: #00c08b; }
.eye { width: 17px; height: 13px; margin: 0 0 3px auto; color: #e0e0e0; }
.link { position: absolute; left: 61px; top: -6px; width: 1px; height: 14px; background: #888; }
.link::after { content: ""; position: absolute; left: 6px; top: 19px; width: 7px; height: 1px; background: #888; }

/* properties */
.props { flex: 1; min-height: 0; border-radius: 6px; overflow: hidden; background: #383838; display: flex; flex-direction: column; text-shadow: 0 1px 2px rgba(0, 0, 0, .6); }
.phead { height: 31px; flex: none; display: flex; align-items: center; padding: 0 18px 1px 11px; }
.phead .ed { margin-right: 19px; }
.phead > span { margin-left: 11px; }
.phead .sep { width: 4px; height: 6px; color: #222; margin: 0 19px 0 17px; }
.pbody { flex: 1; min-height: 0; display: grid; grid-template-columns: 35px minmax(0, 1fr); }
.ptabs { background: #222; padding: 11px 0 0 2px; display: flex; flex-direction: column; gap: 2px; overflow: hidden; }
.ptabs button { width: 33px; height: 33px; flex: none; padding: 0 1px 1px 0; border-radius: 6px 0 0 6px; background: #2b2b2b; color: #c8c8c8; }
.ptabs .brk { margin-top: 9px; }
.ptabs .on { background: #424242; }
.ptabs .red { color: #c66069; }
.ptabs .orange { color: #d38b50; }
.ptabs .azure { color: #6f9bd8; }
.ptabs .navy { color: #5a7fb8; }
.ptabs .green { color: #00d49c; }
.panels { overflow: hidden; }
.lists { display: flex; gap: 11px; padding: 10px 10px 10px; height: 119px; }
.lists.first { padding-top: 5px; height: 114px; }
.list { flex: 1; display: flex; align-items: flex-end; padding: 0 73px 8px 14px; justify-content: space-between; background: #2d2d2d; border: 1px solid #404040; border-radius: 5px; }
.list .tri { color: #bbb; }
.list .grip { color: #ccc; }
.lb { width: 23px; display: flex; flex-direction: column; padding-top: 1px; }
.lb button { height: 24px; background: #545454; color: #e6e6e6; font: 22px/20px "DejaVu Sans Condensed", "DejaVu Sans", sans-serif; }
.lb .plus { border-radius: 5px 5px 0 0; padding-bottom: 2px; }
.lb .minus { border-radius: 0 0 5px 5px; border-top: 1px solid #383838; padding-bottom: 2px; }
.lb .off { background: #464646; color: #777; }
.lb .more2 { margin-top: 8px; border-radius: 5px; background: #282828; border: 1px solid #404040; }
.more2 .chev { width: 12px; height: 10px; color: #ddd; }
.ph { width: 100%; height: 30px; justify-content: flex-start; gap: 8px; padding: 1px 9px 0 11px; background: #424242; font-size: 16px; color: #d8d8d8; }
.ph .tri { color: #a8a8a8; }
.grip { width: 14px; height: 8px; color: #aaa; }
.ph .grip { margin-left: auto; }

/* status bar */
.status { height: 24px; flex: none; display: grid; grid-template-columns: 311px 311px 1fr auto; align-items: center; background: #303030; color: #b0b0b0; padding: 0 43px 1px 15px; text-shadow: 0 1px 1px #111; }
.hints { display: flex; align-items: center; gap: 13px; }
.hints svg:nth-of-type(2) { margin-right: -4px; }
```
